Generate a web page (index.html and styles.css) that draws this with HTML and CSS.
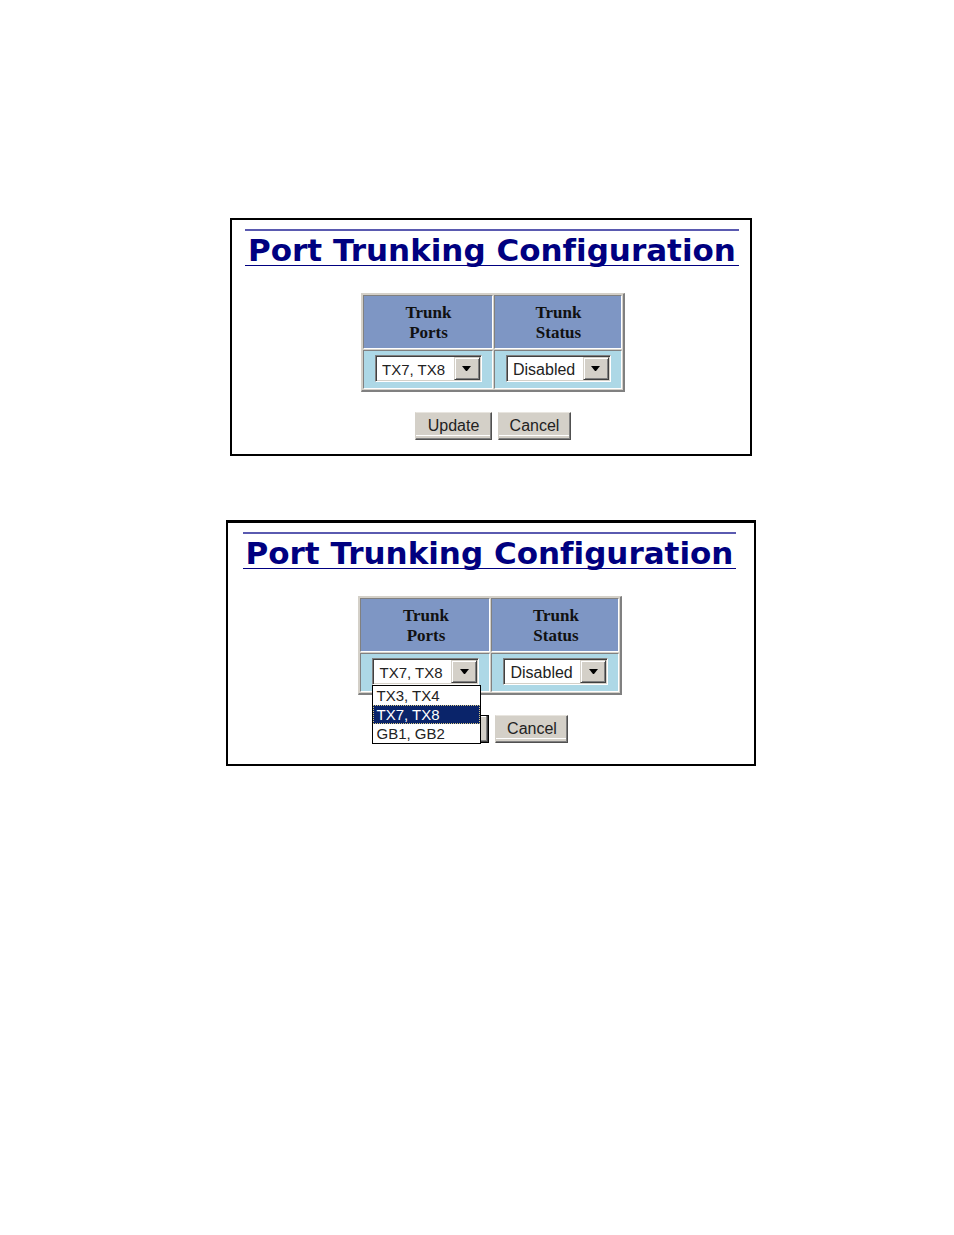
FILE: index.html
```html
<!DOCTYPE html>
<html lang="en">
<head>
    <meta charset="UTF-8">
    <meta name="viewport" content="width=device-width, initial-scale=1.0">
    <title>Port Trunking Configuration</title>
    <link rel="stylesheet" href="styles.css">
</head>
<body>
    <form class="panel">
        <h1>Port Trunking Configuration</h1>

        <table class="trunk-table">
            <tr>
                <th><label for="ports1">Trunk<br>Ports</label></th>
                <th><label for="status1">Trunk<br>Status</label></th>
            </tr>
            <tr>
                <td>
                    <div class="select-box ports">
                        <select id="ports1">
                            <option>TX3, TX4</option>
                            <option selected>TX7, TX8</option>
                            <option>GB1, GB2</option>
                        </select>
                        <span class="arrow"><svg width="9" height="5" viewBox="0 0 9 5"><path d="M0 0h9L5 5H4z"/></svg></span>
                    </div>
                </td>
                <td>
                    <div class="select-box status">
                        <select id="status1">
                            <option selected>Disabled</option>
                            <option>Enabled</option>
                        </select>
                        <span class="arrow"><svg width="9" height="5" viewBox="0 0 9 5"><path d="M0 0h9L5 5H4z"/></svg></span>
                    </div>
                </td>
            </tr>
        </table>

        <div class="buttons">
            <button type="button" class="update">Update</button>
            <button type="button">Cancel</button>
        </div>
    </form>

    <form class="panel panel-open">
        <h1>Port Trunking Configuration</h1>

        <table class="trunk-table">
            <tr>
                <th><label for="ports2">Trunk<br>Ports</label></th>
                <th><label for="status2">Trunk<br>Status</label></th>
            </tr>
            <tr>
                <td>
                    <div class="select-box ports">
                        <select id="ports2">
                            <option>TX3, TX4</option>
                            <option selected>TX7, TX8</option>
                            <option>GB1, GB2</option>
                        </select>
                        <span class="arrow"><svg width="9" height="5" viewBox="0 0 9 5"><path d="M0 0h9L5 5H4z"/></svg></span>
                        <!-- open list -->
                        <ul class="menu" role="listbox" aria-label="Trunk Ports">
                            <li role="option">TX3, TX4</li>
                            <li role="option" class="selected" aria-selected="true">TX7, TX8</li>
                            <li role="option">GB1, GB2</li>
                        </ul>
                    </div>
                </td>
                <td>
                    <div class="select-box status">
                        <select id="status2">
                            <option selected>Disabled</option>
                            <option>Enabled</option>
                        </select>
                        <span class="arrow"><svg width="9" height="5" viewBox="0 0 9 5"><path d="M0 0h9L5 5H4z"/></svg></span>
                    </div>
                </td>
            </tr>
        </table>

        <div class="buttons">
            <button type="button" class="update default" aria-label="Update"></button>
            <button type="button">Cancel</button>
        </div>
    </form>
</body>
</html>
```
FILE: styles.css
```css
* {
    box-sizing: border-box;
}
body {
    margin: 0;
    padding: 218px 0 40px 28px;
    display: flex;
    flex-direction: column;
    align-items: center;
    gap: 64px;
    background-color: white;
    font-family: "Liberation Sans", Arial, sans-serif;
}
.panel {
    display: flex;
    flex-direction: column;
    align-items: center;
    border: 2px solid black;
    padding: 9px 11px 14px 13px;
}
.panel-open {
    border-top-width: 3px;
    padding: 9px 18px 21px 15px;
}
h1 {
    margin: 0 0 27px;
    border-top: 2px solid #5a5ab0;
    border-bottom: 1px solid #000080;
    padding: 4px 3px 0;
    font-family: "DejaVu Sans", Verdana, sans-serif;
    font-size: 31px;
    line-height: 30px;
    font-weight: bold;
    font-variant-ligatures: none;
    color: #000080;
    white-space: nowrap;
}
.trunk-table {
    margin-left: 2px;
    border: solid;
    border-width: 1px 2px 2px 1px;
    border-color: #d4d0c8 #808080 #808080 #d4d0c8;
    border-spacing: 1px;
    background-color: #d4d0c8;
}
th, td {
    border: 1px solid;
    border-color: #808080 #fff #fff #808080;
    padding: 0 10px 0 11px;
}
th {
    height: 54px;
    padding-top: 2px;
    background-color: #7e96c4;
    font-family: "Liberation Serif", "Times New Roman", serif;
    font-size: 17px;
    line-height: 20px;
    color: #111;
}
td {
    height: 39px;
    padding-bottom: 2px;
    background-color: #add8e6;
}
.select-box {
    position: relative;
    height: 27px;
}
.ports {
    width: 107px;
    font-size: 15px;
}
.status {
    width: 105px;
    font-size: 16px;
}
select {
    appearance: none;
    display: block;
    width: 100%;
    height: 100%;
    border: 1px solid;
    border-color: #808080 #fff #fff #808080;
    border-radius: 0;
    box-shadow: inset 1px 1px #404040, inset -1px -1px #d4d0c8;
    padding: 2px 28px 0 6px;
    background-color: white;
    font-family: inherit;
    font-size: inherit;
    color: #222;
}
.arrow {
    position: absolute;
    top: 2px;
    right: 2px;
    bottom: 2px;
    width: 26px;
    display: flex;
    align-items: center;
    justify-content: center;
    border: 1px solid;
    border-color: #d4d0c8 #404040 #404040 #d4d0c8;
    box-shadow: inset 1px 1px #fff, inset -1px -1px #808080;
    background-color: #d4d0c8;
    pointer-events: none;
}
.menu {
    position: absolute;
    z-index: 1;
    top: 100%;
    left: 0;
    width: 109px;
    margin: 0;
    padding: 0;
    border: 1px solid black;
    background-color: white;
    list-style: none;
    line-height: 19px;
    color: #222;
}
.menu li {
    padding-left: 3px;
}
.menu .selected {
    background-color: #0a246a;
    color: white;
    outline: 1px dotted #d8c880;
    outline-offset: -1px;
}
.buttons {
    display: flex;
    gap: 6px;
    margin-top: 20px;
    margin-left: 2px;
}
button {
    width: 73px;
    height: 28px;
    border: 1px solid;
    border-color: #e8e5df #505050 #505050 #d4d0c8;
    border-radius: 0;
    box-shadow: inset -1px -1px #808080, inset 0 -3px #d4d0c8, inset 0 -4px #fff;
    padding: 0;
    background-color: #d4d0c8;
    font-family: inherit;
    font-size: 16px;
    color: #222;
}
.update {
    width: 77px;
}
.default {
    border-color: black;
    box-shadow: inset -1px -1px #404040, inset -2px -2px #808080, inset 1px 1px #fff;
}
```
